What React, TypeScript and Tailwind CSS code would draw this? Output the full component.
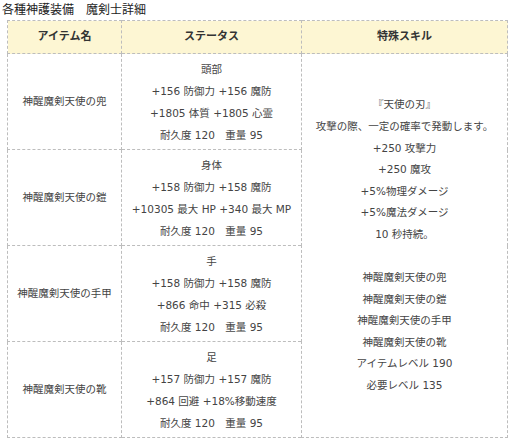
const items = [
  {
    name: "神醒魔剣天使の兜",
    part: "頭部",
    stats: ["+156 防御力 +156 魔防", "+1805 体質 +1805 心霊"],
  },
  {
    name: "神醒魔剣天使の鎧",
    part: "身体",
    stats: ["+158 防御力 +158 魔防", "+10305 最大 HP +340 最大 MP"],
  },
  {
    name: "神醒魔剣天使の手甲",
    part: "手",
    stats: ["+158 防御力 +158 魔防", "+866 命中 +315 必殺"],
  },
  {
    name: "神醒魔剣天使の靴",
    part: "足",
    stats: ["+157 防御力 +157 魔防", "+864 回避 +18%移動速度"],
  },
];

const skill = [
  "『天使の刃』",
  "攻撃の際、一定の確率で発動します。",
  "+250 攻撃力",
  "+250 魔攻",
  "+5%物理ダメージ",
  "+5%魔法ダメージ",
  "10 秒持続。",
  "",
  "神醒魔剣天使の兜",
  "神醒魔剣天使の鎧",
  "神醒魔剣天使の手甲",
  "神醒魔剣天使の靴",
  "アイテムレベル 190",
  "必要レベル 135",
];

export default function App() {
  return (
    <div
      className="h-[444px] w-[512px] bg-white text-[#444]"
      style={{ fontFamily: '"DejaVu Sans", "Noto Sans CJK JP", sans-serif' }}
    >
      {/* 見出し */}
      <h1
        className="h-[20px] pl-[2px] text-[12px] leading-[17px] text-[#222]"
        style={{ fontFamily: '"Noto Sans CJK JP", sans-serif' }}
      >
        各種神護装備　魔剣士詳細
      </h1>

      <table className="ml-[7px] w-[500px] table-fixed border-collapse border border-dashed border-[#bdbdbd] text-center text-[10.5px]">
        <colgroup>
          <col className="w-[114px]" />
          <col className="w-[180px]" />
          <col className="w-[206px]" />
        </colgroup>
        <thead>
          <tr className="h-[33px] bg-[#fdf6d3] text-[11px] font-bold text-[#333]">
            <th className="border border-dashed border-[#bdbdbd]">アイテム名</th>
            <th className="border border-dashed border-[#bdbdbd]">ステータス</th>
            <th className="border border-dashed border-[#bdbdbd]">特殊スキル</th>
          </tr>
        </thead>
        <tbody>
          {items.map((it, i) => (
            <tr key={it.name} className="h-[96px]">
              <td className="border border-dashed border-[#bdbdbd] align-middle">
                {it.name}
              </td>
              <td className="border border-dashed border-[#bdbdbd] py-[3px] align-middle leading-[22px]">
                <div>{it.part}</div>
                {it.stats.map((s) => (
                  <div key={s} className="whitespace-nowrap">
                    {s}
                  </div>
                ))}
                <div>耐久度 120　重量 95</div>
              </td>
              {i === 0 && (
                <td
                  rowSpan={4}
                  className="border border-dashed border-[#bdbdbd] align-middle leading-[21.6px]"
                >
                  {skill.map((s, k) => (
                    <div key={k} className="h-[21.6px]">
                      {s}
                    </div>
                  ))}
                </td>
              )}
            </tr>
          ))}
        </tbody>
      </table>
    </div>
  );
}
